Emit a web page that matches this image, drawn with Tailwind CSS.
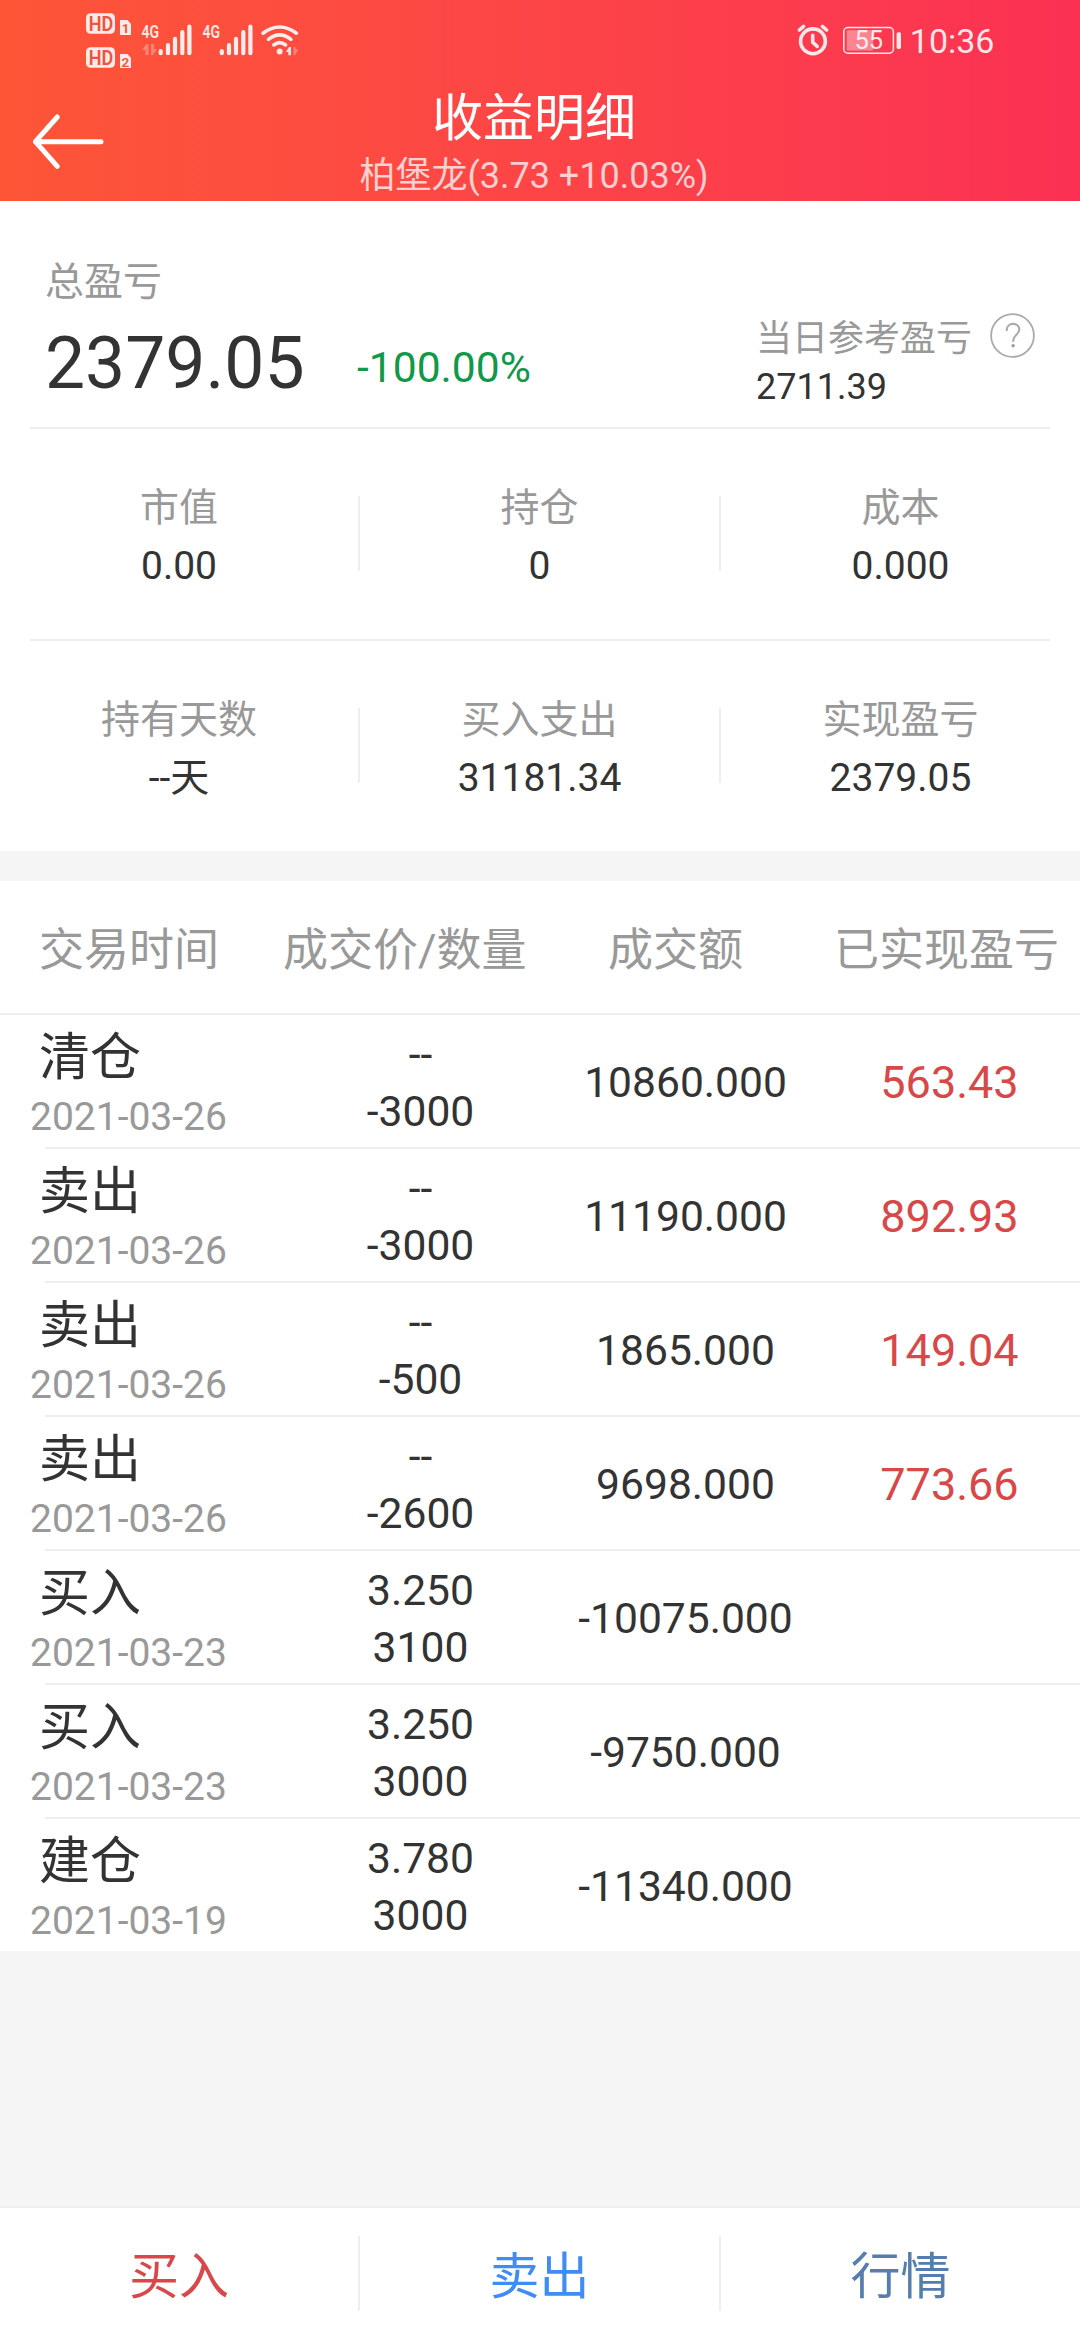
<!DOCTYPE html>
<html lang="zh-CN">
<head>
<meta charset="utf-8">
<title>收益明细</title>
<script src="https://cdn.jsdelivr.net/npm/@tailwindcss/browser@4"></script>
</head>
<body class="flex h-[2340px] w-[1080px] flex-col overflow-hidden bg-[#f5f5f5] font-[Roboto,'Noto_Sans_CJK_SC',sans-serif] text-[#333]">

<header class="h-[201px] shrink-0 bg-linear-to-r from-[#fd5536] to-[#fb3053] text-white">
  <!-- Status bar -->
  <div class="flex h-20 justify-between">
    <svg class="h-20 w-[320px]" viewBox="0 0 320 80" fill="#fff" fill-opacity=".88">
      <rect x="86" y="13.3" width="29" height="20.4" rx="4.5"/>
      <rect x="86" y="47.3" width="29" height="20.4" rx="4.5"/>
      <path d="M120 20h7.5l3.5 4v11h-11zM120 54h7.5l3.5 4v10h-11z"/>
      <g font-family="Roboto, sans-serif" font-weight="600" fill="#ed5340" fill-opacity="1">
        <text x="88.7" y="30.5" font-size="20" textLength="24.5" lengthAdjust="spacingAndGlyphs">HD</text>
        <text x="88.7" y="64.5" font-size="20" textLength="24.5" lengthAdjust="spacingAndGlyphs">HD</text>
        <text x="121.8" y="33" font-size="13.5">1</text>
        <text x="121.5" y="66.5" font-size="13.5">2</text>
      </g>
      <g font-family="Roboto, sans-serif" font-weight="600" font-size="19">
        <text x="141.5" y="38.3" textLength="17.5" lengthAdjust="spacingAndGlyphs">4G</text>
        <text x="202.5" y="38.3" textLength="17.5" lengthAdjust="spacingAndGlyphs">4G</text>
      </g>
      <path fill-opacity=".3" d="M142 50l4.5-6h2v11h-3v-5zM151 44h3v5h3l-4 6h-2z"/>
      <g fill="none" stroke="#fff" stroke-opacity=".9" stroke-width="4.2" stroke-linecap="round">
        <path d="M160.7 51.2v2M168 45.2v8M175 38.8v14.4M182.3 32.2v21M189.4 26.7v26.5"/>
        <path d="M221.8 51.2v2M229 45.2v8M236 38.8v14.4M243.3 32.2v21M250.4 26.7v26.5"/>
      </g>
      <g fill="none" stroke="#fff" stroke-opacity=".9" stroke-width="3.6" stroke-linecap="round">
        <path d="M263 33.2q16.7-12.4 33.4 0M268.5 39.3q11.2-8.8 22.4 0M273.8 45q5.9-4.6 11.8 0"/>
      </g>
      <circle cx="279.7" cy="51.5" r="3"/>
      <path d="M285.8 52l3.2-5h2v8.3h-2.6V52z"/>
      <path fill-opacity=".3" d="M293.5 47h2.2v2.5h2.6l-3.4 5.8h-1.4z"/>
    </svg>
    <svg class="h-20 w-[290px]" viewBox="790 0 290 80" fill="none" stroke="#fff" stroke-opacity=".88">
      <g stroke-width="3.6" stroke-linecap="round" stroke-linejoin="round">
        <circle cx="813" cy="41.3" r="12.4"/>
        <path d="M812.7 35.2v7l4.5 4.2M799.4 30l4.2-3.6M826.6 30l-4.2-3.6"/>
      </g>
      <rect x="843.8" y="27.6" width="49.6" height="25.6" rx="4.2" stroke-width="1.5"/>
      <rect x="846.7" y="30.3" width="26.6" height="20.2" rx="1" fill="#fff" fill-opacity=".38" stroke="none"/>
      <rect x="896.6" y="32.3" width="4.4" height="16.6" rx="1.6" fill="#fff" fill-opacity=".88" stroke="none"/>
      <g font-family="Roboto, sans-serif" fill="#fff" fill-opacity=".88" stroke="none">
        <text x="854.4" y="49.3" font-size="25.5">55</text>
        <text x="909.8" y="53" font-size="34">10:36</text>
      </g>
    </svg>
  </div>
  <!-- Title bar -->
  <div class="flex">
    <div class="w-[120px] pl-8 pt-[33px]">
      <svg class="h-[58px] w-[74px]" viewBox="32 113 74 58" fill="none" stroke="#fff" stroke-width="5" stroke-linecap="round" stroke-linejoin="round"><path d="M101 141.7H35.5M57.3 117L35.4 141.7l21.9 24.7"/></svg>
    </div>
    <div class="flex flex-1 flex-col items-center pt-[9px]">
      <h1 class="text-[51px] leading-[60px]">收益明细</h1>
      <p class="mt-[7px] text-4xl leading-10 text-white/75">柏堡龙(3.73 +10.03%)</p>
    </div>
    <div class="w-[132px]"></div>
  </div>
</header>

<section class="h-[650px] shrink-0 bg-white">
  <div class="mx-[30px] flex h-[228px] border-b-2 border-[#eee]">
    <div class="w-[726px] pl-[15px] pt-14">
      <p class="text-[39px] leading-[50px] text-[#999]">总盈亏</p>
      <div class="mt-[17px] flex">
        <span class="w-[262px] text-[71.4px] leading-20">2379.05</span>
        <span class="ml-[50px] mt-[3px] text-[42.6px] leading-20 text-[#0f9948]">-100.00%</span>
      </div>
    </div>
    <div class="pt-[116px] text-4xl leading-[44px]">
      <p class="text-[#999]">当日参考盈亏</p>
      <p class="mt-1">2711.39</p>
    </div>
    <svg class="ml-[18px] mt-[112px] size-[45px]" viewBox="0 0 45 45" fill="none" stroke="#aaa" stroke-width="1.8" stroke-linecap="round"><circle cx="22.5" cy="22.5" r="21.4"/><path stroke-width="2.1" d="M16.7 17.2c0-8.4 12.6-8.2 12.6-.6 0 5.2-6.2 5.4-6.2 11.4"/><circle cx="23.1" cy="32.8" r="1.7" fill="#999" stroke="none"/></svg>
  </div>

  <div class="mx-[30px] grid h-[212px] grid-cols-[328px_2px_359px_2px_329px] border-b-2 border-[#eee] text-center text-[39px] leading-[50px]">
    <div class="-ml-[30px] pt-[54px]"><p class="text-[#999]">市值</p><p class="mt-2">0.00</p></div>
    <div class="mt-[67px] h-[75px] bg-[#eee]"></div>
    <div class="pt-[54px]"><p class="text-[#999]">持仓</p><p class="mt-2">0</p></div>
    <div class="mt-[67px] h-[75px] bg-[#eee]"></div>
    <div class="-mr-[30px] pt-[54px]"><p class="text-[#999]">成本</p><p class="mt-2">0.000</p></div>
  </div>

  <div class="mx-[30px] grid h-[210px] grid-cols-[328px_2px_359px_2px_329px] text-center text-[39px] leading-[50px]">
    <div class="-ml-[30px] pt-[54px]"><p class="text-[#999]">持有天数</p><p class="mt-2">--天</p></div>
    <div class="mt-[67px] h-[75px] bg-[#eee]"></div>
    <div class="pt-[54px]"><p class="text-[#999]">买入支出</p><p class="mt-2">31181.34</p></div>
    <div class="mt-[67px] h-[75px] bg-[#eee]"></div>
    <div class="-mr-[30px] pt-[54px]"><p class="text-[#999]">实现盈亏</p><p class="mt-2">2379.05</p></div>
  </div>
</section>

<section class="mt-[30px] shrink-0 bg-white">
  <div class="grid h-[134px] grid-cols-[244px_325px_226px_1fr] border-b-2 border-[#eee] pl-[39px] pt-[5px] text-[45px] leading-[130px] whitespace-nowrap text-[#999]">
    <span>交易时间</span><span>成交价/数量</span><span>成交额</span><span>已实现盈亏</span>
  </div>
  <div id="rows"></div>
</section>

<div class="flex-1"></div>

<nav class="grid h-[134px] shrink-0 grid-cols-[358px_2px_359px_2px_359px] border-t-2 border-[#eee] bg-white text-center text-[50px] leading-[138px]">
  <a class="text-[#d84848]">买入</a>
  <div class="mt-7 h-[75px] bg-[#eee]"></div>
  <a class="text-[#3f8cf4]">卖出</a>
  <div class="mt-7 h-[75px] bg-[#eee]"></div>
  <a class="text-[#557eae]">行情</a>
</nav>

<script>
const trades = [
  ['清仓', '2021-03-26', '--', '-3000', '10860.000', '563.43'],
  ['卖出', '2021-03-26', '--', '-3000', '11190.000', '892.93'],
  ['卖出', '2021-03-26', '--', '-500', '1865.000', '149.04'],
  ['卖出', '2021-03-26', '--', '-2600', '9698.000', '773.66'],
  ['买入', '2021-03-23', '3.250', '3100', '-10075.000', ''],
  ['买入', '2021-03-23', '3.250', '3000', '-9750.000', ''],
  ['建仓', '2021-03-19', '3.780', '3000', '-11340.000', ''],
];
document.getElementById('rows').innerHTML = trades.map(([type, date, price, qty, amount, profit], i) => `
  <div class="grid h-[132px] grid-cols-[288px_265px_265px_263px] text-center text-[42.6px]">
    <div class="pt-[13px] text-left">
      <p class="pl-[39px] text-[51px] leading-[60px]">${type}</p>
      <p class="mt-1.5 pl-[30px] text-[39px] leading-[46px] text-[#999]">${date}</p>
    </div>
    <div class="pt-[11px] leading-[57px]"><p>${price}</p><p>${qty}</p></div>
    <div class="pt-0.5 leading-[130px]">${amount}</div>
    <div class="pt-[3px] text-[45px] leading-[130px] text-[#d84848]">${profit}</div>
  </div>
  ${i < trades.length - 1 ? '<div class="ml-[45px] h-0.5 bg-[#eee]"></div>' : ''}`).join('');
</script>
</body>
</html>
